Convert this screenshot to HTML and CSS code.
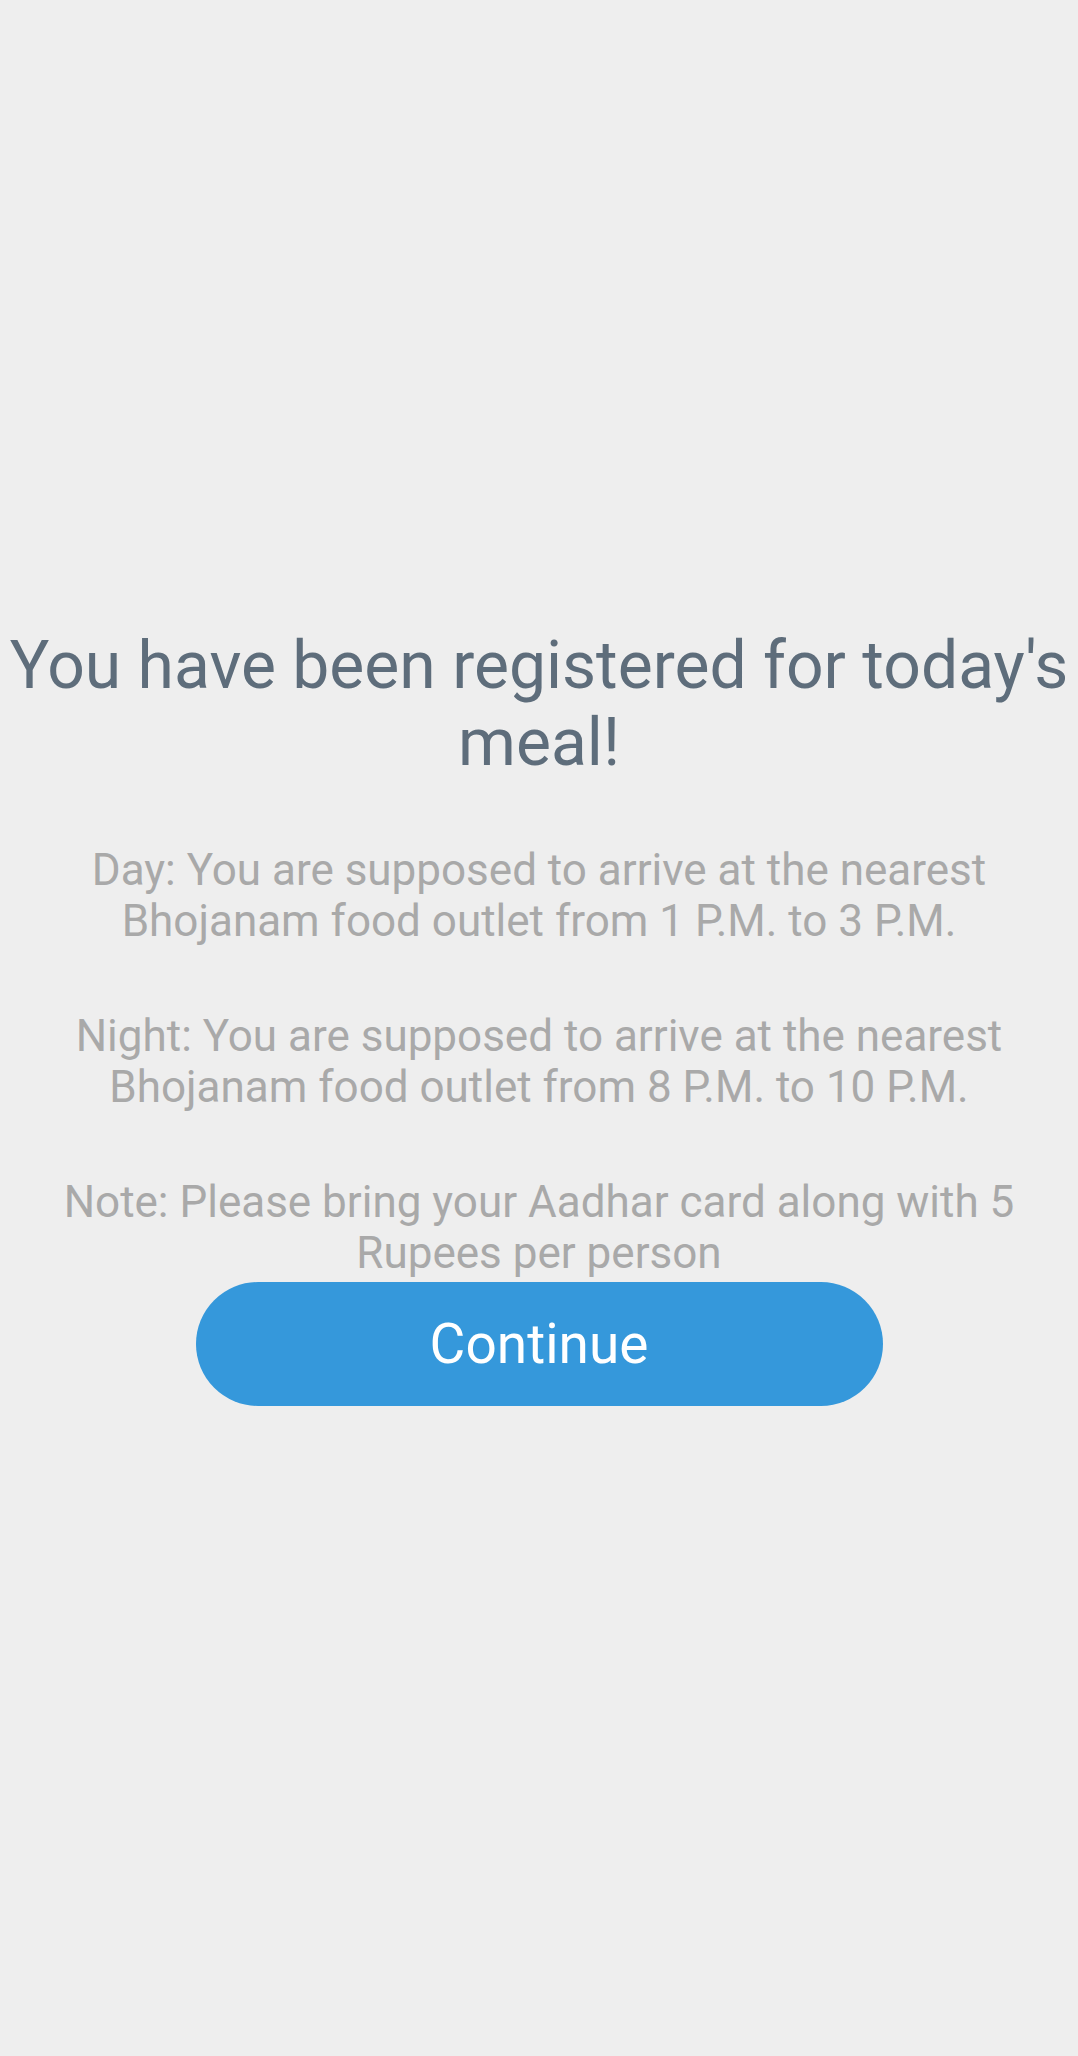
FILE: index.html
```html
<!DOCTYPE html>
<html lang="en">
<head>
<meta charset="utf-8">
<title>Registered</title>
<link rel="stylesheet" href="styles.css">
</head>
<body>
<main class="screen">
  <h1 class="title">You have been registered for today's meal!</h1>
  <p class="info">Day: You are supposed to arrive at the nearest Bhojanam food outlet from 1 P.M. to 3 P.M.</p>
  <p class="info">Night: You are supposed to arrive at the nearest Bhojanam food outlet from 8 P.M. to 10 P.M.</p>
  <p class="info note">Note: Please bring your Aadhar card along with 5 Rupees per person</p>
  <button class="continue" type="button">Continue</button>
</main>
</body>
</html>
```

FILE: styles.css
```css
html, body {
  margin: 0;
  padding: 0;
  background: #eeeeee;
}

body {
  font-family: Roboto, "Noto Sans", "Liberation Sans", sans-serif;
  width: 1078px;
  height: 2056px;
  overflow: hidden;
}

.screen {
  display: flex;
  flex-direction: column;
  align-items: center;
  padding-top: 627px;
  box-sizing: border-box;
}

.title {
  margin: 0;
  font-weight: 400;
  font-size: 66px;
  line-height: 77.3px;
  color: #5e6d7b;
  text-align: center;
  width: 100%;
}

.info {
  margin: 63px 0 0;
  font-size: 44px;
  line-height: 51.5px;
  color: #a9a9a9;
  text-align: center;
  width: 1000px;
}

.continue {
  margin-top: 2px;
  width: 687px;
  height: 124px;
  border: none;
  border-radius: 62px;
  background: #3598db;
  color: #ffffff;
  font-family: Roboto, "Noto Sans", "Liberation Sans", sans-serif;
  font-size: 55px;
  padding: 0;
}
```
